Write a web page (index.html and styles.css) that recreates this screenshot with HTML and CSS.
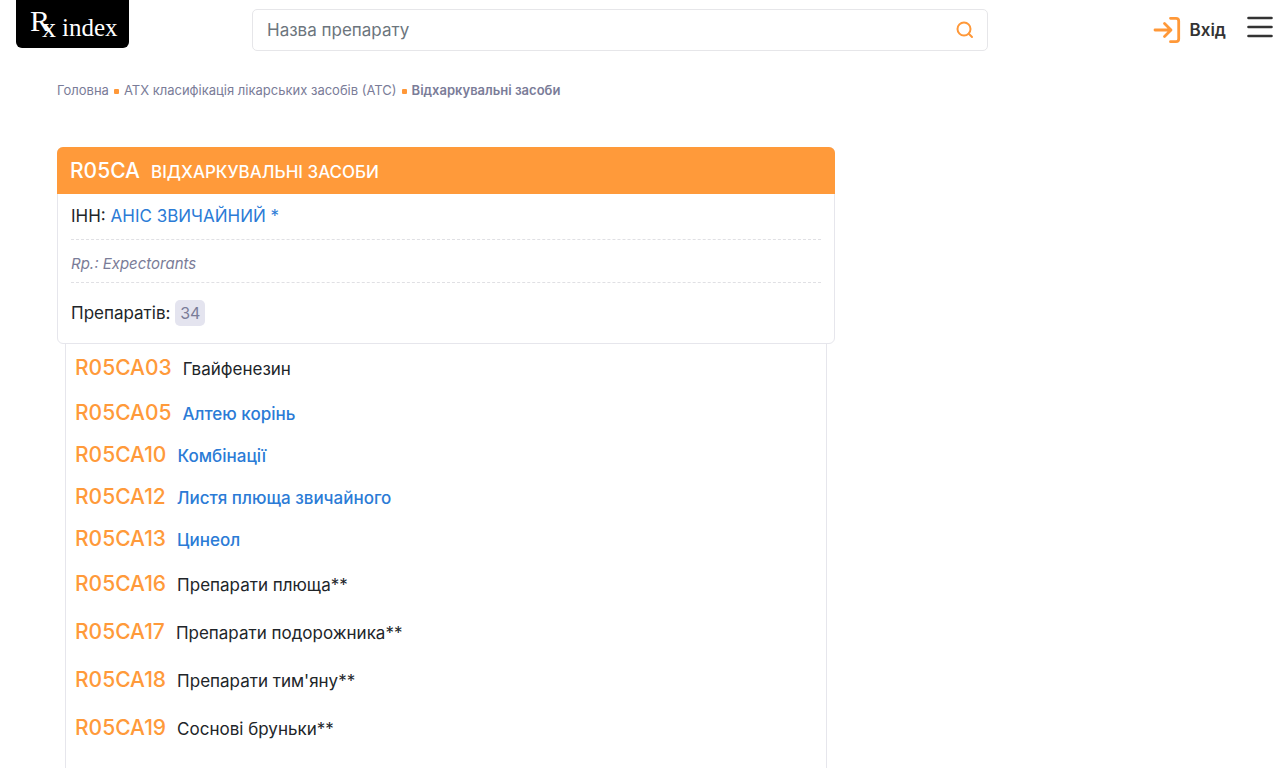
FILE: index.html
```html
<!DOCTYPE html>
<html lang="uk">
  <head>
    <meta charset="UTF-8" />
    <meta name="viewport" content="width=device-width, initial-scale=1.0" />
    <title>Відхаркувальні засоби - Rx index</title>
    <link rel="stylesheet" href="styles.css">
  </head>
  <body>
    <header class="header">
      <a class="logo" href="#" aria-label="Rx index">
        <span class="logo-r">R</span>
        <span class="logo-x">x</span>
        <span class="logo-text">index</span>
      </a>

      <form class="search">
        <input type="text" aria-label="Назва препарату" placeholder="Назва препарату" />
        <button type="submit" aria-label="Пошук">
          <svg width="18" height="18" viewBox="0 0 18 18" fill="none" stroke="#ff9838" stroke-width="2" stroke-linecap="round">
            <circle cx="8" cy="8" r="6.5" />
            <path d="M12.8 12.8L16 16" />
          </svg>
        </button>
      </form>

      <div class="user-nav">
        <a class="login" href="#">
          <svg width="28" height="28" viewBox="0 0 28 28" fill="none" stroke="#ff9838" stroke-width="2.8" stroke-linecap="round" stroke-linejoin="round">
            <path d="M2 14H17.5M11.5 7.5L18 14L11.5 20.5" />
            <path d="M17.5 2.3H23Q25.7 2.3 25.7 5V23Q25.7 25.7 23 25.7H17.5" />
          </svg>
          Вхід
        </a>
        <button class="menu-btn" type="button" aria-label="Меню">
          <svg width="26" height="22" viewBox="0 0 26 22" stroke="#333" stroke-width="2.6" stroke-linecap="round">
            <path d="M1.5 2H24.5M1.5 11H24.5M1.5 20H24.5" />
          </svg>
        </button>
      </div>
    </header>

    <main class="container">
      <nav class="breadcrumbs">
        <a href="#">Головна</a>
        <a href="#">АТХ класифікація лікарських засобів (АТС)</a>
        <b>Відхаркувальні засоби</b>
      </nav>

      <div class="content">
        <section class="card">
          <h1 class="card-header"><span class="card-code">R05CA</span>ВІДХАРКУВАЛЬНІ ЗАСОБИ</h1>
          <div class="card-body">
            <div class="inn">ІНН: <a href="#">АНІС ЗВИЧАЙНИЙ *</a></div>
            <div class="rp">Rp.: Expectorants</div>
            <div class="total">Препаратів: <span class="badge">34</span></div>
          </div>
        </section>

        <ul class="atc-list">
          <li><span class="code">R05CA03</span>Гвайфенезин</li>
          <li class="linked"><span class="code">R05CA05</span><a href="#">Алтею корінь</a></li>
          <li class="linked"><span class="code">R05CA10</span><a href="#">Комбінації</a></li>
          <li class="linked"><span class="code">R05CA12</span><a href="#">Листя плюща звичайного</a></li>
          <li class="linked"><span class="code">R05CA13</span><a href="#">Цинеол</a></li>
          <li><span class="code">R05CA16</span>Препарати плюща**</li>
          <li><span class="code">R05CA17</span>Препарати подорожника**</li>
          <li><span class="code">R05CA18</span>Препарати тим'яну**</li>
          <li><span class="code">R05CA19</span>Соснові бруньки**</li>
        </ul>
      </div>
    </main>
  </body>
</html>
```

FILE: styles.css
```css
* {
  box-sizing: border-box;
}

body {
  font-family: Inter, "Liberation Sans", sans-serif;
  font-size: 17px;
  line-height: 24px;
  color: #212529;
  background-color: #fff;
  margin: 0;
  display: flex;
  flex-direction: column;
  min-height: 100vh;
}

a {
  color: #2b7bd6;
  text-decoration: none;
}

button {
  border: 0;
  padding: 0;
  background: none;
  cursor: pointer;
}

svg {
  display: block;
}

/* header */
.header {
  display: grid;
  grid-template-columns: 236px 1fr 292px;
  align-items: start;
  padding-left: 16px;
  height: 60px;
}

.logo {
  display: flex;
  width: 113px;
  height: 48px;
  padding-left: 14px;
  border-radius: 0 0 6px 6px;
  background-color: #000;
  color: #fff;
  font-family: "Liberation Serif", serif;
}

.logo-r {
  font-size: 30px;
  line-height: 42px;
}

/* the x tucks under the leg of the R */
.logo-x {
  margin-left: -8px;
  font-size: 28px;
  line-height: 56px;
}

.logo-text {
  margin-left: 6px;
  font-size: 25px;
  line-height: 56px;
}

.search {
  display: flex;
  align-items: center;
  height: 42px;
  margin-top: 9px;
  padding-right: 13px;
  border: 1px solid #e6e6e9;
  border-radius: 5px;
}

.search input {
  flex: 1;
  min-width: 0;
  height: 100%;
  padding: 0 14px;
  border: 0;
  outline: 0;
  background: none;
  font: inherit;
}

.search input::placeholder {
  color: #6c757d;
}

.user-nav {
  display: flex;
  align-items: center;
  justify-content: flex-end;
  margin-top: 16px;
  padding-right: 7px;
}

.login {
  display: flex;
  align-items: center;
  gap: 9px;
  color: #333;
  font-size: 17px;
  font-weight: 600;
}

.menu-btn {
  margin: 0 0 6px 21px;
}

/* page */
.container {
  display: flex;
  flex-direction: column;
  flex: 1;
  padding: 0 56px 0 57px;
}

.breadcrumbs {
  display: flex;
  align-items: center;
  height: 60px;
  color: #7a7c98;
  font-size: 13px;
}

.breadcrumbs a {
  display: flex;
  align-items: center;
  color: inherit;
}

.breadcrumbs a::after {
  content: "";
  width: 5px;
  height: 5px;
  margin: 2px 5px 0;
  border-radius: 1px;
  background-color: #ff9838;
}

.breadcrumbs b {
  font-weight: 600;
}

.content {
  display: flex;
  flex-direction: column;
  flex: 1;
  width: 66.6667%;
  margin-top: 27px;
}

.card {
  border: 1px solid #e6e6ec;
  border-radius: 6px;
}

.card-header {
  margin: -1px -1px 0;
  padding: 13px 13px 10px;
  border-radius: 6px 6px 0 0;
  background-color: #ff9a3a;
  color: #fff;
  font-size: 17px;
  font-weight: 500;
  line-height: 24px;
}

.card-code,
.code {
  margin-right: 11px;
  font-size: 21px;
  font-weight: 500;
  line-height: 1;
}

.card-body {
  padding: 0 13px;
}

.inn,
.rp {
  border-bottom: 1px dashed #e0e0e4;
}

.inn {
  padding: 10px 0 11px;
}

.rp {
  padding: 12px 0 6px;
  color: #7a7c98;
  font-size: 15px;
  font-style: italic;
}

.total {
  padding: 17px 0;
}

.badge {
  display: inline-block;
  padding: 0 5px;
  border-radius: 5px;
  background-color: #e4e4ef;
  color: #7a7c98;
  font-size: 16px;
  line-height: 26px;
}

/* drug groups */
.atc-list {
  flex: 1;
  margin: 0 8px;
  padding: 1px 9px 0;
  border: 1px solid #e6e6ec;
  border-width: 0 1px;
  list-style: none;
}

.atc-list li {
  line-height: 48px;
  font-weight: 400;
}

.atc-list .linked {
  line-height: 42px;
  font-weight: 500;
}

.code {
  color: #ff9a3a;
}
```
